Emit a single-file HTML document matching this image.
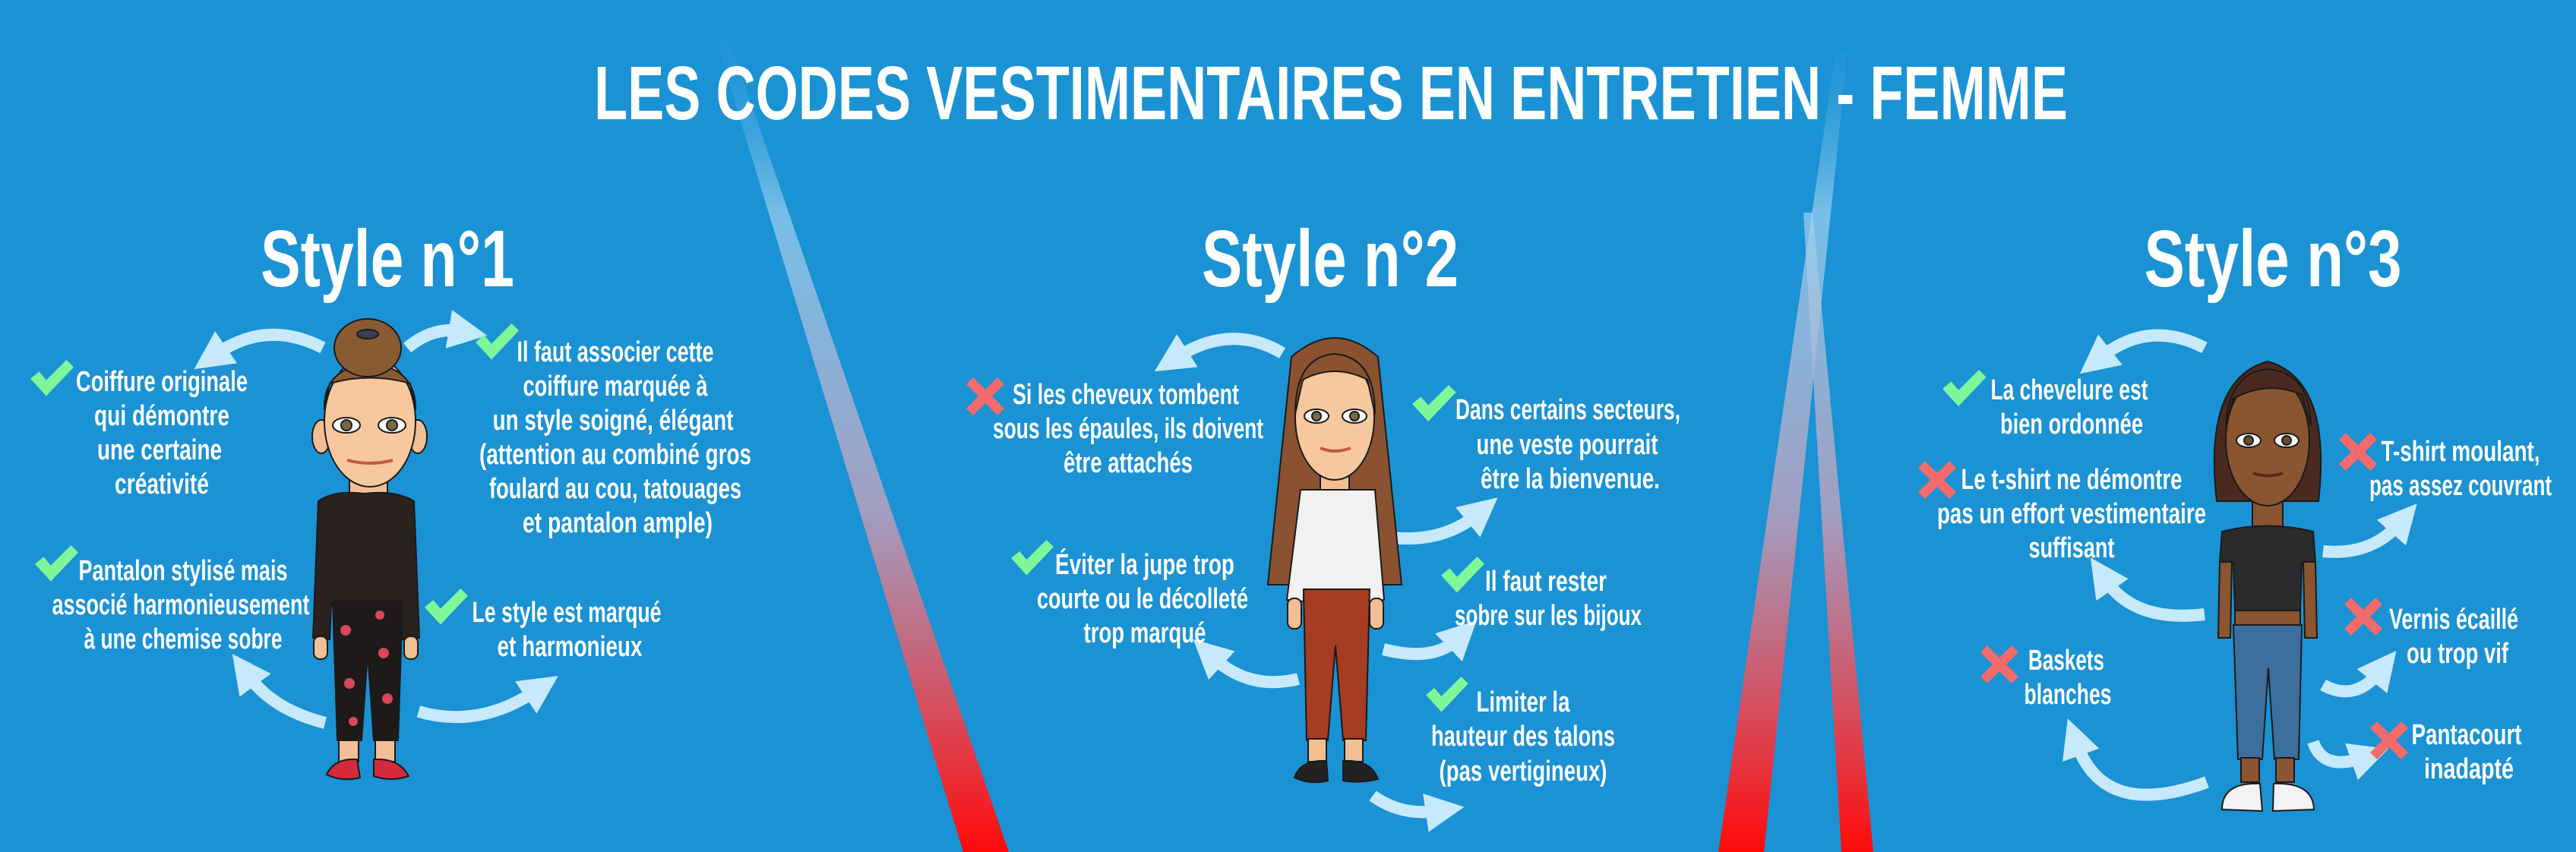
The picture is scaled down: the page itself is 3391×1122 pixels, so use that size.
<!DOCTYPE html>
<html><head><meta charset="utf-8"><style>
html,body{margin:0;padding:0;background:#1a92d4;}
svg{display:block}
text{font-family:"Liberation Sans Narrow","Liberation Sans",sans-serif;font-weight:bold;fill:#fff;}
</style></head><body>
<svg width="3391" height="1122" viewBox="0 0 3391 1122" xmlns="http://www.w3.org/2000/svg">
<defs>
<linearGradient id="bm" gradientUnits="userSpaceOnUse" x1="0" y1="0" x2="0" y2="1122">
<stop offset="0" stop-color="#1a92d4" stop-opacity="0"/>
<stop offset="0.25" stop-color="#9fd2ef" stop-opacity="0.7"/>
<stop offset="0.6" stop-color="#b9a0bd" stop-opacity="0.85"/>
<stop offset="1" stop-color="#ff0a0a"/>
</linearGradient>
<marker id="ah" viewBox="0 0 10 10" refX="3" refY="5" markerWidth="3.2" markerHeight="3.2" orient="auto" markerUnits="strokeWidth">
<path d="M0,0 L10,5 L0,10 Z" fill="#c6e9fc"/>
</marker>
<g id="chk"><path d="M0,26 L12,16 L22,28 L50,0 L60,10 L22,50 Z" fill="#7ef79b"/></g>
<g id="crs"><path d="M0,9 L9,0 L25,16 L41,0 L50,9 L34,25 L50,41 L41,50 L25,34 L9,50 L0,41 L16,25 Z" fill="#f56b6b"/></g>
</defs>
<rect width="3391" height="1122" fill="#1a92d4"/>
<!-- beams -->
<polygon points="932,18 948,18 1328,1122 1268,1122" fill="url(#bm)"/>
<polygon points="2416,70 2432,70 2322,1122 2262,1122" fill="url(#bm)"/>
<polygon points="2374,280 2386,280 2466,1122 2424,1122" fill="url(#bm)"/>

<!-- titles -->
<text x="1752" y="157" font-size="100" text-anchor="middle" textLength="1940" lengthAdjust="spacingAndGlyphs">LES CODES VESTIMENTAIRES EN ENTRETIEN - FEMME</text>
<text x="510" y="377" font-size="106" text-anchor="middle" textLength="334" lengthAdjust="spacingAndGlyphs">Style n°1</text>
<text x="1751" y="377" font-size="106" text-anchor="middle" textLength="338" lengthAdjust="spacingAndGlyphs">Style n°2</text>
<text x="2992" y="377" font-size="106" text-anchor="middle" textLength="339" lengthAdjust="spacingAndGlyphs">Style n°3</text>

<!-- arrows -->
<g fill="none" stroke="#c6e9fc" stroke-width="16" marker-end="url(#ah)">
<path d="M425,458 Q352,420 285,466"/>
<path d="M536,458 Q570,430 606,436"/>
<path d="M428,952 Q360,935 327,890"/>
<path d="M551,937 Q630,960 705,910"/>
<path d="M1688,465 Q1621,425 1550,470"/>
<path d="M1793,701 Q1887,725 1944,678"/>
<path d="M1709,894 Q1645,910 1597,866"/>
<path d="M1821,855 Q1887,872 1918,842"/>
<path d="M1807,1048 Q1845,1075 1892,1068"/>
<path d="M2902,458 Q2829,420 2766,470"/>
<path d="M3058,726 Q3121,732 3158,690"/>
<path d="M2902,809 Q2810,820 2772,764"/>
<path d="M3058,902 Q3100,925 3132,885"/>
<path d="M2905,1030 Q2770,1080 2734,980"/>
<path d="M3045,977 Q3058,1016 3110,998"/>
</g>

<!-- icons -->
<use href="#chk" transform="translate(40,474) scale(0.95)"/>
<use href="#chk" transform="translate(626,426) scale(0.95)"/>
<use href="#chk" transform="translate(46,718) scale(0.95)"/>
<use href="#chk" transform="translate(559,775) scale(0.95)"/>
<use href="#crs" transform="translate(1272,497)"/>
<use href="#chk" transform="translate(1859,507) scale(0.96)"/>
<use href="#chk" transform="translate(1331,711) scale(0.93)"/>
<use href="#chk" transform="translate(1897,733) scale(0.95)"/>
<use href="#chk" transform="translate(1877,891) scale(0.93)"/>
<use href="#chk" transform="translate(2557,487) scale(0.96)"/>
<use href="#crs" transform="translate(2525,607)"/>
<use href="#crs" transform="translate(3079,570)"/>
<use href="#crs" transform="translate(3086,787)"/>
<use href="#crs" transform="translate(2607,850)"/>
<use href="#crs" transform="translate(3120,950)"/>

<!-- text -->
<g font-size="38" text-anchor="middle" lengthAdjust="spacingAndGlyphs">
<text x="213" y="515" textLength="226" lengthAdjust="spacingAndGlyphs">Coiffure originale</text>
<text x="213" y="560" textLength="178" lengthAdjust="spacingAndGlyphs">qui démontre</text>
<text x="210" y="605" textLength="164" lengthAdjust="spacingAndGlyphs">une certaine</text>
<text x="213" y="650" textLength="124" lengthAdjust="spacingAndGlyphs">créativité</text>

<text x="810" y="476" textLength="259" lengthAdjust="spacingAndGlyphs">Il faut associer cette</text>
<text x="810" y="521" textLength="243" lengthAdjust="spacingAndGlyphs">coiffure marquée à</text>
<text x="807" y="566" textLength="317" lengthAdjust="spacingAndGlyphs">un style soigné,  élégant</text>
<text x="810" y="611" textLength="358" lengthAdjust="spacingAndGlyphs">(attention au  combiné gros</text>
<text x="810" y="656" textLength="332" lengthAdjust="spacingAndGlyphs">foulard au cou, tatouages</text>
<text x="813" y="701" textLength="250" lengthAdjust="spacingAndGlyphs">et pantalon ample)</text>

<text x="241" y="764" textLength="275" lengthAdjust="spacingAndGlyphs">Pantalon stylisé mais</text>
<text x="238" y="809" textLength="339" lengthAdjust="spacingAndGlyphs">associé harmonieusement</text>
<text x="241" y="854" textLength="261" lengthAdjust="spacingAndGlyphs">à une chemise sobre</text>

<text x="746" y="819" textLength="249" lengthAdjust="spacingAndGlyphs">Le style est marqué</text>
<text x="750" y="864" textLength="191" lengthAdjust="spacingAndGlyphs">et harmonieux</text>

<text x="1482" y="532" textLength="298" lengthAdjust="spacingAndGlyphs">Si les cheveux tombent</text>
<text x="1485" y="577" textLength="356" lengthAdjust="spacingAndGlyphs">sous les épaules, ils doivent</text>
<text x="1485" y="622" textLength="170" lengthAdjust="spacingAndGlyphs">être attachés</text>

<text x="2064" y="552" textLength="296" lengthAdjust="spacingAndGlyphs">Dans certains secteurs,</text>
<text x="2063" y="598" textLength="239" lengthAdjust="spacingAndGlyphs">une veste pourrait</text>
<text x="2067" y="643" textLength="236" lengthAdjust="spacingAndGlyphs">être la bienvenue.</text>

<text x="1507" y="756" textLength="236" lengthAdjust="spacingAndGlyphs">Éviter la  jupe trop</text>
<text x="1504" y="801" textLength="278" lengthAdjust="spacingAndGlyphs">courte ou le décolleté</text>
<text x="1507" y="846" textLength="161" lengthAdjust="spacingAndGlyphs">trop marqué</text>

<text x="2035" y="778" textLength="160" lengthAdjust="spacingAndGlyphs">Il faut rester</text>
<text x="2038" y="823" textLength="246" lengthAdjust="spacingAndGlyphs">sobre sur les bijoux</text>

<text x="2005" y="937" textLength="123" lengthAdjust="spacingAndGlyphs">Limiter la</text>
<text x="2005" y="982" textLength="242" lengthAdjust="spacingAndGlyphs">hauteur des talons</text>
<text x="2005" y="1028" textLength="221" lengthAdjust="spacingAndGlyphs">(pas vertigineux)</text>

<text x="2724" y="526" textLength="207" lengthAdjust="spacingAndGlyphs">La chevelure est</text>
<text x="2727" y="571" textLength="188" lengthAdjust="spacingAndGlyphs">bien ordonnée</text>

<text x="2727" y="644" textLength="291" lengthAdjust="spacingAndGlyphs">Le t-shirt ne démontre</text>
<text x="2727" y="689" textLength="354" lengthAdjust="spacingAndGlyphs">pas un effort vestimentaire</text>
<text x="2727" y="734" textLength="113" lengthAdjust="spacingAndGlyphs">suffisant</text>

<text x="3239" y="607" textLength="209" lengthAdjust="spacingAndGlyphs">T-shirt moulant,</text>
<text x="3239" y="652" textLength="240" lengthAdjust="spacingAndGlyphs">pas assez couvrant</text>

<text x="3230" y="828" textLength="170" lengthAdjust="spacingAndGlyphs">Vernis écaillé</text>
<text x="3235" y="873" textLength="134" lengthAdjust="spacingAndGlyphs">ou trop vif</text>

<text x="2720" y="882" textLength="100" lengthAdjust="spacingAndGlyphs">Baskets</text>
<text x="2722" y="927" textLength="115" lengthAdjust="spacingAndGlyphs">blanches</text>

<text x="3247" y="980" textLength="145" lengthAdjust="spacingAndGlyphs">Pantacourt</text>
<text x="3250" y="1025" textLength="118" lengthAdjust="spacingAndGlyphs">inadapté</text>
</g>

<!-- Figure 1 -->
<g stroke="#1a1a1a" stroke-width="2">
<rect x="460" y="620" width="50" height="45" fill="#f2bf95"/>
<path d="M419,660 Q440,645 480,650 Q520,645 545,660 L552,840 L530,842 L528,795 L436,795 L434,842 L412,840 Z" fill="#2a221f"/>
<rect x="413" y="838" width="18" height="30" rx="8" fill="#f2bf95"/>
<rect x="532" y="838" width="18" height="30" rx="8" fill="#f2bf95"/>
<path d="M438,792 L530,792 L524,975 L492,975 L484,860 L476,975 L444,975 Z" fill="#1e1a1a"/>
<rect x="446" y="975" width="26" height="28" fill="#f2bf95"/>
<rect x="494" y="975" width="26" height="28" fill="#f2bf95"/>
<path d="M430,1020 Q440,998 470,1000 L474,1024 Q450,1030 430,1020 Z" fill="#d42a3c"/>
<path d="M492,1000 Q525,998 538,1022 Q515,1030 492,1022 Z" fill="#d42a3c"/>
<ellipse cx="423" cy="575" rx="12" ry="22" fill="#f2bf95"/>
<ellipse cx="550" cy="575" rx="12" ry="22" fill="#f2bf95"/>
<ellipse cx="487" cy="555" rx="60" ry="86" fill="#f7c79d"/>
<path d="M427,540 Q425,485 487,478 Q548,485 547,540 L540,505 Q487,490 434,505 Z" fill="#8a5a33"/>
<ellipse cx="484" cy="458" rx="44" ry="38" fill="#8a5a33"/>
<ellipse cx="484" cy="440" rx="14" ry="6" fill="#3d3d5a"/>
<ellipse cx="456" cy="560" rx="18" ry="10" fill="#fff"/><circle cx="456" cy="560" r="7" fill="#7a6a40"/>
<ellipse cx="516" cy="560" rx="18" ry="10" fill="#fff"/><circle cx="516" cy="560" r="7" fill="#7a6a40"/>
<path d="M457,606 Q487,614 517,606" fill="none" stroke="#c45a40" stroke-width="4"/>
</g>
<g fill="#d6485a"><circle cx="455" cy="830" r="7"/><circle cx="505" cy="860" r="7"/><circle cx="460" cy="900" r="7"/><circle cx="510" cy="920" r="7"/><circle cx="465" cy="950" r="6"/><circle cx="500" cy="810" r="6"/></g>

<!-- Figure 2 -->
<g stroke="#1a1a1a" stroke-width="2">
<path d="M1700,470 Q1757,420 1814,470 L1845,770 L1669,770 Z" fill="#8a5230"/>
<rect x="1738" y="610" width="38" height="40" fill="#f2bf95"/>
<path d="M1712,645 L1810,645 L1822,790 L1800,792 L1800,780 L1716,780 L1716,792 L1694,790 Z" fill="#f1f1f1"/>
<rect x="1695" y="788" width="18" height="40" rx="8" fill="#f2bf95"/>
<rect x="1803" y="788" width="18" height="40" rx="8" fill="#f2bf95"/>
<path d="M1716,776 L1803,776 L1798,975 L1768,975 L1758,850 L1748,975 L1720,975 Z" fill="#a63c22"/>
<rect x="1722" y="973" width="24" height="30" fill="#f2bf95"/>
<rect x="1770" y="973" width="24" height="30" fill="#f2bf95"/>
<path d="M1704,1024 Q1712,1000 1746,1002 L1748,1028 Q1724,1034 1704,1024 Z" fill="#222"/>
<path d="M1768,1002 Q1805,1000 1814,1026 Q1790,1032 1768,1028 Z" fill="#222"/>
<ellipse cx="1757" cy="550" rx="52" ry="82" fill="#f7c79d"/>
<path d="M1705,545 Q1705,470 1757,466 Q1810,470 1810,545 L1800,500 Q1757,478 1715,500 Z" fill="#8a5230"/>
<ellipse cx="1733" cy="548" rx="16" ry="9" fill="#fff"/><circle cx="1733" cy="548" r="6" fill="#7a6a40"/>
<ellipse cx="1783" cy="548" rx="16" ry="9" fill="#fff"/><circle cx="1783" cy="548" r="6" fill="#7a6a40"/>
<path d="M1738,590 Q1757,598 1778,590" fill="none" stroke="#c45a40" stroke-width="4"/>
</g>

<!-- Figure 3 -->
<g stroke="#1a1a1a" stroke-width="2">
<rect x="2965" y="660" width="40" height="40" fill="#8a5530"/>
<path d="M2925,700 Q2985,685 3045,700 L3048,740 L3030,742 L3028,805 L2942,805 L2940,742 L2922,740 Z" fill="#2b2b2b"/>
<path d="M2922,740 L2938,740 L2936,840 L2920,840 Z" fill="#8a5530"/>
<path d="M3032,740 L3048,740 L3050,840 L3034,840 Z" fill="#8a5530"/>
<rect x="2942" y="804" width="86" height="22" fill="#8a5530"/>
<path d="M2940,823 L3030,823 L3026,1000 L2994,1000 L2986,880 L2978,1000 L2946,1000 Z" fill="#3d6f9c"/>
<rect x="2950" y="998" width="24" height="32" fill="#8a5530"/>
<rect x="2996" y="998" width="24" height="32" fill="#8a5530"/>
<path d="M2925,1066 Q2925,1030 2975,1032 L2978,1068 Z" fill="#f3f3f3"/>
<path d="M2993,1032 Q3045,1030 3046,1066 L2992,1068 Z" fill="#f3f3f3"/>
<path d="M2918,660 Q2900,500 2985,476 Q3070,500 3052,660 Z" fill="#4a2a1f"/>
<ellipse cx="2985" cy="580" rx="55" ry="86" fill="#8a5530"/>
<path d="M2930,560 Q2935,490 2985,486 Q3040,490 3042,560 L3030,520 Q2985,500 2940,525 Z" fill="#4a2a1f"/>
<ellipse cx="2960" cy="580" rx="16" ry="9" fill="#fff"/><circle cx="2960" cy="580" r="6" fill="#6a4a2a"/>
<ellipse cx="3010" cy="580" rx="16" ry="9" fill="#fff"/><circle cx="3010" cy="580" r="6" fill="#6a4a2a"/>
<path d="M2966,623 Q2985,630 3005,623" fill="none" stroke="#5a2a1a" stroke-width="4"/>
</g>
</svg>
</body></html>
